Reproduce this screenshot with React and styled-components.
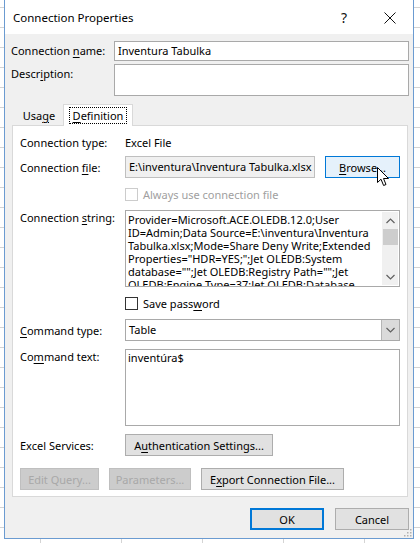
import React from "react";
import styled, { createGlobalStyle, css } from "styled-components";

const Global = createGlobalStyle`
  html, body { margin: 0; padding: 0; }
  body {
    width: 420px;
    height: 543px;
    overflow: hidden;
    background-color: #ffffff;
    background-image:
      linear-gradient(to right, #d4d4d4 1px, transparent 1px),
      linear-gradient(to bottom, #d4d4d4 1px, transparent 1px);
    background-size: 81px 100%, 100% 20px;
    background-position: 40px 0, 0 7px;
    font-family: "Noto Sans", "Open Sans", sans-serif;
    font-size: 11px;
    line-height: 15px;
    color: #000;
  }
`;

const Page = styled.div`
  width: 420px;
  height: 543px;
  display: flex;
  padding-left: 4px;
  box-sizing: border-box;
`;

const Dialog = styled.div`
  width: 410px;
  height: 539px;
  box-sizing: border-box;
  border: 1px solid #6b9bd1;
  border-top: none;
  background: #f0f0f0;
  display: flex;
  flex-direction: column;
  position: relative;
`;

const TitleBar = styled.div`
  height: 34px;
  background: #fff;
  display: flex;
  align-items: center;
  padding-left: 8px;
  padding-top: 1px;
  box-sizing: border-box;
`;

const Title = styled.div`
  flex: 1;
  font-size: 11.5px;
  line-height: 16px;
  color: #000;
`;

const TitleButton = styled.div`
  width: 46px;
  height: 32px;
  display: flex;
  align-items: center;
  justify-content: center;
  font-size: 14px;
  color: #111;
`;

const Body = styled.div`
  flex: 1;
  display: flex;
  flex-direction: column;
  padding: 7px 4px 0 6px;
`;

const TopRow = styled.div`
  display: flex;
  align-items: flex-start;
  margin-top: ${(p) => p.$mt || 0}px;
`;

const TopLabel = styled.div`
  width: 103px;
  line-height: 20px;
  flex-shrink: 0;
`;

const Field = styled.div`
  flex: 1;
  height: ${(p) => p.$h}px;
  box-sizing: border-box;
  border: 1px solid ${(p) => p.$border || "#a9a9a9"};
  background: ${(p) => p.$bg || "#fff"};
  padding: 0 3px;
  line-height: ${(p) => Math.min(p.$h - 2, 20)}px;
  white-space: nowrap;
  overflow: hidden;
  position: relative;
`;

const U = styled.span`
  text-decoration: underline;
  text-underline-offset: 2px;
`;

const TabStrip = styled.div`
  display: flex;
  align-items: flex-end;
  height: 21px;
  margin-top: 8px;
  padding-left: 3px;
  margin-right: 1px;
  margin-left: 1px;
  position: relative;
  z-index: 1;
`;

const Tab = styled.div`
  box-sizing: border-box;
  display: flex;
  align-items: center;
  justify-content: center;
  ${(p) =>
    p.$active
      ? css`
          width: 70px;
          background: #fff;
          border: 1px solid #d9d9d9;
          border-bottom: none;
          margin-bottom: -1px;
          height: 22px;
        `
      : css`
          height: 19px;
          width: 48px;
        `}
`;

const FocusRect = styled.span`
  outline: 1px dotted #000;
  outline-offset: 0;
  padding: 0 3px;
  line-height: 15px;
`;

const Panel = styled.div`
  height: 372px;
  box-sizing: border-box;
  background: #fff;
  border: 1px solid #d9d9d9;
  margin: 0 1px 0 1px;
  padding: 8px 7px 0 7px;
  display: flex;
  flex-direction: column;
`;

const Row = styled.div`
  display: flex;
  align-items: ${(p) => (p.$top ? "flex-start" : "center")};
  margin-top: ${(p) => p.$mt || 0}px;
  height: ${(p) => p.$h || 16}px;
  flex-shrink: 0;
`;

const Label = styled.div`
  width: 105px;
  flex-shrink: 0;
  line-height: 15px;
`;

const Content = styled.div`
  flex: 1;
  display: flex;
  align-items: center;
  gap: 10px;
  min-width: 0;
  height: 100%;
`;

const Button = styled.div`
  box-sizing: border-box;
  height: 22px;
  width: ${(p) => p.$w}px;
  flex-shrink: 0;
  display: flex;
  align-items: center;
  justify-content: center;
  background: #e1e1e1;
  border: 1px solid #adadad;
  white-space: nowrap;
  position: relative;
  ${(p) =>
    p.$hover &&
    css`
      background: #e5f1fb;
      border-color: #0078d7;
    `}
  ${(p) =>
    p.$default &&
    css`
      border: 2px solid #0078d7;
    `}
  ${(p) =>
    p.$disabled &&
    css`
      background: #cccccc;
      border-color: #bfbfbf;
      color: #a8a8a8;
    `}
`;

const CheckRow = styled.div`
  display: flex;
  align-items: center;
  gap: 5px;
  height: 13px;
  color: ${(p) => (p.$disabled ? "#a0a0a0" : "#000")};
`;

const Box = styled.div`
  width: 13px;
  height: 13px;
  flex-shrink: 0;
  box-sizing: border-box;
  border: 1px solid ${(p) => (p.$disabled ? "#cccccc" : "#333")};
  background: #fff;
`;

const TextBox = styled.div`
  flex: 1;
  height: 77px;
  box-sizing: border-box;
  border: 1px solid #a9a9a9;
  background: #fff;
  display: flex;
  position: relative;
  overflow: hidden;
`;

const TextLines = styled.div`
  flex: 1;
  padding: ${(p) => p.$pt || 2}px 0 0 2px;
  line-height: 13px;
  overflow: hidden;
`;

const Line = styled.div`
  white-space: nowrap;
`;

const ScrollBar = styled.div`
  width: 16px;
  background: #f0f0f0;
  display: flex;
  flex-direction: column;
  align-items: center;
  margin: 1px 1px 1px 0;
`;

const ScrollArrow = styled.div`
  height: 17px;
  width: 16px;
  display: flex;
  align-items: center;
  justify-content: center;
`;

const Thumb = styled.div`
  width: 15px;
  height: 16px;
  background: #cdcdcd;
`;

const Spacer = styled.div`
  flex: 1;
`;

const SelectBox = styled.div`
  flex: 1;
  height: 22px;
  box-sizing: border-box;
  border: 1px solid #a9a9a9;
  background: #fff;
  display: flex;
  align-items: center;
`;

const SelectText = styled.div`
  flex: 1;
  padding-left: 3px;
  line-height: 20px;
`;

const DropButton = styled.div`
  width: 17px;
  height: 20px;
  background: #dadada;
  border-left: 1px solid #b5b5b5;
  display: flex;
  align-items: center;
  justify-content: center;
`;

const ButtonRow = styled.div`
  display: flex;
  gap: 10px;
  margin-top: 12px;
`;

const Footer = styled.div`
  display: flex;
  justify-content: flex-end;
  gap: 11px;
  margin-top: 11px;
  margin-right: 0px;
`;

const Cursor = styled.svg`
  position: absolute;
  left: 51px;
  top: 10px;
`;

const Grip = styled.svg`
  position: absolute;
  right: 1px;
  bottom: 1px;
`;

const Chevron = ({ up }) => (
  <svg width="9" height="6" viewBox="0 0 9 6">
    <path
      d={up ? "M0.5 5 L4.5 1 L8.5 5" : "M0.5 1 L4.5 5 L8.5 1"}
      fill="none"
      stroke="#606060"
      strokeWidth="1.2"
    />
  </svg>
);

export default function App() {
  return (
    <>
      <Global />
      <Page>
        <Dialog>
          <TitleBar>
            <Title>Connection Properties</Title>
            <TitleButton>?</TitleButton>
            <TitleButton>
              <svg width="12" height="12" viewBox="0 0 12 12">
                <path d="M0.5 0.5 L11.5 11.5 M11.5 0.5 L0.5 11.5" stroke="#111" strokeWidth="1" />
              </svg>
            </TitleButton>
          </TitleBar>
          <Body>
            <TopRow>
              <TopLabel>
                Connection <U>n</U>ame:
              </TopLabel>
              <Field $h={20}>Inventura Tabulka</Field>
            </TopRow>
            <TopRow $mt={3}>
              <TopLabel>
                Descr<U>i</U>ption:
              </TopLabel>
              <Field $h={32} />
            </TopRow>
            <TabStrip>
              <Tab>
                Usa<U>g</U>e
              </Tab>
              <Tab $active>
                <FocusRect>
                  <U>D</U>efinition
                </FocusRect>
              </Tab>
            </TabStrip>
            <Panel>
              <Row $h={16}>
                <Label>Connection type:</Label>
                <Content>Excel File</Content>
              </Row>
              <Row $mt={6} $h={22}>
                <Label>
                  Connection <U>f</U>ile:
                </Label>
                <Content>
                  <Field $h={22} $bg="#f0f0f0" $border="#bfbfbf">
                    E:\inventura\Inventura Tabulka.xlsx
                  </Field>
                  <Button $w={75} $hover>
                    <span>
                      <U>B</U>rowse...
                    </span>
                    <Cursor width="13" height="20" viewBox="0 0 13 20">
                      <path
                        d="M0.5 0.5 L0.5 15.5 L4 12.2 L6.6 18.5 L9 17.5 L6.5 11.5 L11.5 11.5 Z"
                        fill="#fff"
                        stroke="#000"
                        strokeWidth="1"
                        strokeLinejoin="miter"
                      />
                    </Cursor>
                  </Button>
                </Content>
              </Row>
              <Row $mt={10} $h={13}>
                <Label />
                <Content>
                  <CheckRow $disabled>
                    <Box $disabled />
                    Always use connection file
                  </CheckRow>
                </Content>
              </Row>
              <Row $mt={9} $h={77} $top>
                <Label>
                  Connection <U>s</U>tring:
                </Label>
                <Content>
                  <TextBox>
                    <TextLines $pt={2}>
                      <Line>Provider=Microsoft.ACE.OLEDB.12.0;User</Line>
                      <Line>ID=Admin;Data Source=E:\inventura\Inventura</Line>
                      <Line>Tabulka.xlsx;Mode=Share Deny Write;Extended</Line>
                      <Line>Properties="HDR=YES;";Jet OLEDB:System</Line>
                      <Line>database="";Jet OLEDB:Registry Path="";Jet</Line>
                      <Line>OLEDB:Engine Type=37;Jet OLEDB:Database</Line>
                    </TextLines>
                    <ScrollBar>
                      <ScrollArrow>
                        <Chevron up />
                      </ScrollArrow>
                      <Thumb />
                      <Spacer />
                      <ScrollArrow>
                        <Chevron />
                      </ScrollArrow>
                    </ScrollBar>
                  </TextBox>
                </Content>
              </Row>
              <Row $mt={10} $h={13}>
                <Label />
                <Content>
                  <CheckRow>
                    <Box />
                    <span>
                      Save pass<U>w</U>ord
                    </span>
                  </CheckRow>
                </Content>
              </Row>
              <Row $mt={9} $h={22}>
                <Label>
                  <U>C</U>ommand type:
                </Label>
                <Content>
                  <SelectBox>
                    <SelectText>Table</SelectText>
                    <DropButton>
                      <Chevron />
                    </DropButton>
                  </SelectBox>
                </Content>
              </Row>
              <Row $mt={8} $h={77} $top>
                <Label>
                  Co<U>m</U>mand text:
                </Label>
                <Content>
                  <TextBox>
                    <TextLines $pt={1}>
                      <Line>inventúra$</Line>
                    </TextLines>
                  </TextBox>
                </Content>
              </Row>
              <Row $mt={8} $h={22}>
                <Label>Excel Services:</Label>
                <Content>
                  <Button $w={148}>
                    <span>
                      A<U>u</U>thentication Settings...
                    </span>
                  </Button>
                </Content>
              </Row>
              <ButtonRow>
                <Button $w={79} $disabled>
                  Edit Query...
                </Button>
                <Button $w={82} $disabled>
                  Parameters...
                </Button>
                <Button $w={143}>
                  <span>
                    E<U>x</U>port Connection File...
                  </span>
                </Button>
              </ButtonRow>
            </Panel>
            <Footer>
              <Button $w={74} $default>
                OK
              </Button>
              <Button $w={74}>Cancel</Button>
            </Footer>
          </Body>
          <Grip width="8" height="8" viewBox="0 0 8 8">
            <g fill="#b0b0b0">
              <rect x="6" y="0" width="1.5" height="1.5" />
              <rect x="3" y="3" width="1.5" height="1.5" />
              <rect x="6" y="3" width="1.5" height="1.5" />
              <rect x="0" y="6" width="1.5" height="1.5" />
              <rect x="3" y="6" width="1.5" height="1.5" />
              <rect x="6" y="6" width="1.5" height="1.5" />
            </g>
          </Grip>
        </Dialog>
      </Page>
    </>
  );
}
